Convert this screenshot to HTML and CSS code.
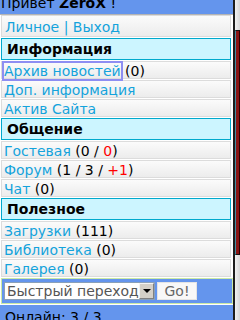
FILE: index.html
```html
<!DOCTYPE html>
<html lang="ru">
<head>
<meta charset="utf-8">
<title>Меню</title>
<link rel="stylesheet" href="styles.css">
</head>
<body>
<div class="screen">
  <div class="page">
    <div class="hello">Привет <b>ZeroX</b> !</div>
    <div class="links"><a href="#">Личное</a> | <a href="#">Выход</a></div>

    <div class="sec">Информация</div>
    <div class="row"><a href="#" class="focus">Архив новостей</a> (0)</div>
    <div class="row"><a href="#">Доп. информация</a></div>
    <div class="row"><a href="#">Актив Сайта</a></div>

    <div class="sec">Общение</div>
    <div class="row"><a href="#">Гостевая</a> (0 / <span class="red">0</span>)</div>
    <div class="row"><a href="#">Форум</a> (1 / 3 / <span class="red">+1</span>)</div>
    <div class="row"><a href="#">Чат</a> (0)</div>

    <div class="sec">Полезное</div>
    <div class="row"><a href="#">Загрузки</a> (111)</div>
    <div class="row"><a href="#">Библиотека</a> (0)</div>
    <div class="row"><a href="#">Галерея</a> (0)</div>

    <form class="jump">
      <div class="select"><span class="sel-text">Быстрый переход</span><span class="sel-btn"><span class="tri"></span></span></div>
      <button type="button" class="go">Go!</button>
    </form>
    <div class="online">Онлайн: 3 / 3</div>
  </div>
  <div class="scrollbar">
    <div class="track-top"></div>
    <div class="thumb"></div>
  </div>
</div>
</body>
</html>
```
FILE: styles.css
```css
html, body {
  margin: 0;
  padding: 0;
  background: #fff;
}
body {
  font-family: "DejaVu Sans", sans-serif;
  font-size: 14px;
  line-height: 16px;
  color: #000;
}
a {
  color: #14a3dc;
  text-decoration: none;
}
.screen {
  display: flex;
  height: 320px;
  overflow: hidden;
}
.page {
  width: 233px;
  flex: none;
}
.hello {
  background: #6495ed;
  height: 19px;
  margin-top: -5px;
  line-height: 16px;
  padding-left: 1px;
  border-bottom: 1px solid #b4b4b4;
  white-space: nowrap;
}
.links {
  margin: 0 2px 1px 1px;
  height: 20px;
  padding: 0 3px;
  line-height: 22px;
  border: 1px solid #dcdcdc;
  background: linear-gradient(#fbfbfb, #ececec);
  color: #14a3dc;
  white-space: nowrap;
}
.sec {
  margin: 1px 2px 1px 1px;
  height: 20px;
  padding-left: 5px;
  line-height: 20px;
  border: 1px solid #00a9cc;
  background: #ccf5ff;
  font-weight: bold;
}
.row {
  margin: 0 2px 1px 1px;
  height: 14px;
  padding: 2px 2px 0 2px;
  line-height: 14px;
  border: 1px solid #dcdcdc;
  background: linear-gradient(#fbfbfb, #ececec);
  white-space: nowrap;
}
.focus {
  outline: 2px solid #8e8ef2;
  outline-offset: 0;
}
.red {
  color: #ff0000;
}
.jump {
  margin: 0 0 0 1px;
  height: 24px;
  padding-left: 2px;
  border: 1px solid #cbeaa6;
  background: #6495ed;
  display: flex;
  align-items: center;
  gap: 2px;
}
.select {
  display: flex;
  width: 151px;
  height: 18px;
  box-sizing: border-box;
  border: 1px solid #8aa0b8;
  background: #fff;
}
.sel-text {
  flex: 1;
  padding-left: 2px;
  color: #555;
  line-height: 16px;
  overflow: hidden;
  white-space: nowrap;
}
.sel-btn {
  width: 15px;
  flex: none;
  box-sizing: border-box;
  background: #d4d0c8;
  border-top: 1px solid #f4f4f4;
  border-left: 1px solid #f4f4f4;
  border-right: 1px solid #808080;
  border-bottom: 1px solid #808080;
  display: flex;
  align-items: center;
  justify-content: center;
}
.tri {
  width: 0;
  height: 0;
  border-left: 4px solid transparent;
  border-right: 4px solid transparent;
  border-top: 4px solid #000;
}
.go {
  width: 40px;
  height: 18px;
  padding: 0;
  border: 1px solid #e4e4e4;
  background: #f8f8f8;
  color: #666;
  font-family: "DejaVu Sans", sans-serif;
  font-size: 14px;
  line-height: 16px;
}
.online {
  margin-top: 1px;
  height: 20px;
  padding: 4px 0 0 5px;
  background: #6495ed;
  white-space: nowrap;
}
.scrollbar {
  width: 5px;
  flex: none;
  border-left: 2px solid #1c1c1c;
  background: linear-gradient(to right, #f2f2f2, #d6d6d6);
  display: flex;
  flex-direction: column;
}
.track-top {
  height: 30px;
  flex: none;
}
.thumb {
  height: 225px;
  flex: none;
  box-sizing: border-box;
  border-top: 1px solid #111;
  border-bottom: 1px solid #111;
  border-left: 1px solid #3f8fa3;
  border-right: 1px solid #2a0000;
  background: #8a1515;
}
```
